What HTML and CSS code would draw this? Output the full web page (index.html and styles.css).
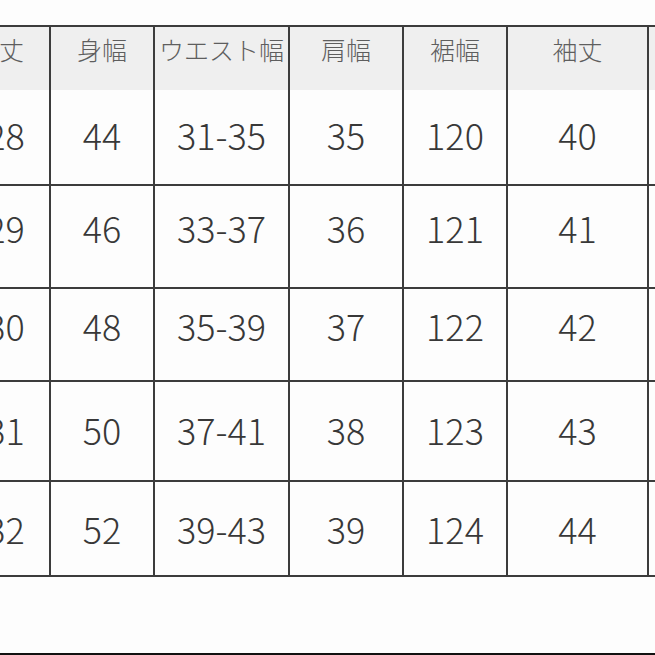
FILE: index.html
```html
<!DOCTYPE html>
<html lang="ja">
<head>
<meta charset="utf-8">
<title>サイズ表</title>
<link rel="stylesheet" href="styles.css">
</head>
<body>
<div class="page">
  <div class="chart">
    <div class="cell head head-first">着丈</div>
    <div class="cell head">身幅</div>
    <div class="cell head">ウエスト幅</div>
    <div class="cell head">肩幅</div>
    <div class="cell head">裾幅</div>
    <div class="cell head">袖丈</div>
    <div class="cell head"></div>

    <div class="cell r1">28</div>
    <div class="cell r1">44</div>
    <div class="cell r1">31-35</div>
    <div class="cell r1">35</div>
    <div class="cell r1">120</div>
    <div class="cell r1">40</div>
    <div class="cell r1"></div>

    <div class="cell r2">29</div>
    <div class="cell r2">46</div>
    <div class="cell r2">33-37</div>
    <div class="cell r2">36</div>
    <div class="cell r2">121</div>
    <div class="cell r2">41</div>
    <div class="cell r2"></div>

    <div class="cell r3">30</div>
    <div class="cell r3">48</div>
    <div class="cell r3">35-39</div>
    <div class="cell r3">37</div>
    <div class="cell r3">122</div>
    <div class="cell r3">42</div>
    <div class="cell r3"></div>

    <div class="cell r4">31</div>
    <div class="cell r4">50</div>
    <div class="cell r4">37-41</div>
    <div class="cell r4">38</div>
    <div class="cell r4">123</div>
    <div class="cell r4">43</div>
    <div class="cell r4"></div>

    <div class="cell r5">32</div>
    <div class="cell r5">52</div>
    <div class="cell r5">39-43</div>
    <div class="cell r5">39</div>
    <div class="cell r5">124</div>
    <div class="cell r5">44</div>
    <div class="cell r5"></div>
  </div>
  <div class="base-line"></div>
</div>
</body>
</html>
```

FILE: styles.css
```css
html, body {
  margin: 0;
  padding: 0;
  background: #fdfdfd;
}

body {
  width: 655px;
  height: 655px;
  overflow: hidden;
  font-family: "Noto Sans CJK JP", "Noto Sans", sans-serif;
}

.page {
  height: 655px;
  display: flex;
  flex-direction: column;
  padding-top: 25px;
  box-sizing: border-box;
}

.chart {
  margin-left: -38px;
  display: grid;
  grid-template-columns: 89px 104px 135px 114px 104px 141px 60px;
  grid-template-rows: 63px 96px 103px 93px 100px 95px;
  border-top: 2px solid #3c3c3c;
}

.cell {
  box-sizing: border-box;
  border-right: 2px solid #3c3c3c;
  border-bottom: 2px solid #3c3c3c;
  display: flex;
  align-items: center;
  justify-content: center;
  color: #383838;
  font-size: 36px;
  font-weight: 300;
  line-height: 1;
}

.head {
  background: #efefef;
  border-bottom: none;
  color: #5e5e5e;
  font-size: 25px;
  font-weight: 300;
  padding-bottom: 18px;
}

.head-first {
  padding-right: 13px;
}

.r1 { padding-bottom: 6px; }
.r2 { padding-bottom: 19px; }
.r3 { padding-bottom: 19px; }
.r4 { padding-bottom: 4px; }
.r5 { padding-bottom: 2px; }

.base-line {
  margin-top: auto;
  height: 2px;
  background: #111111;
}
```
